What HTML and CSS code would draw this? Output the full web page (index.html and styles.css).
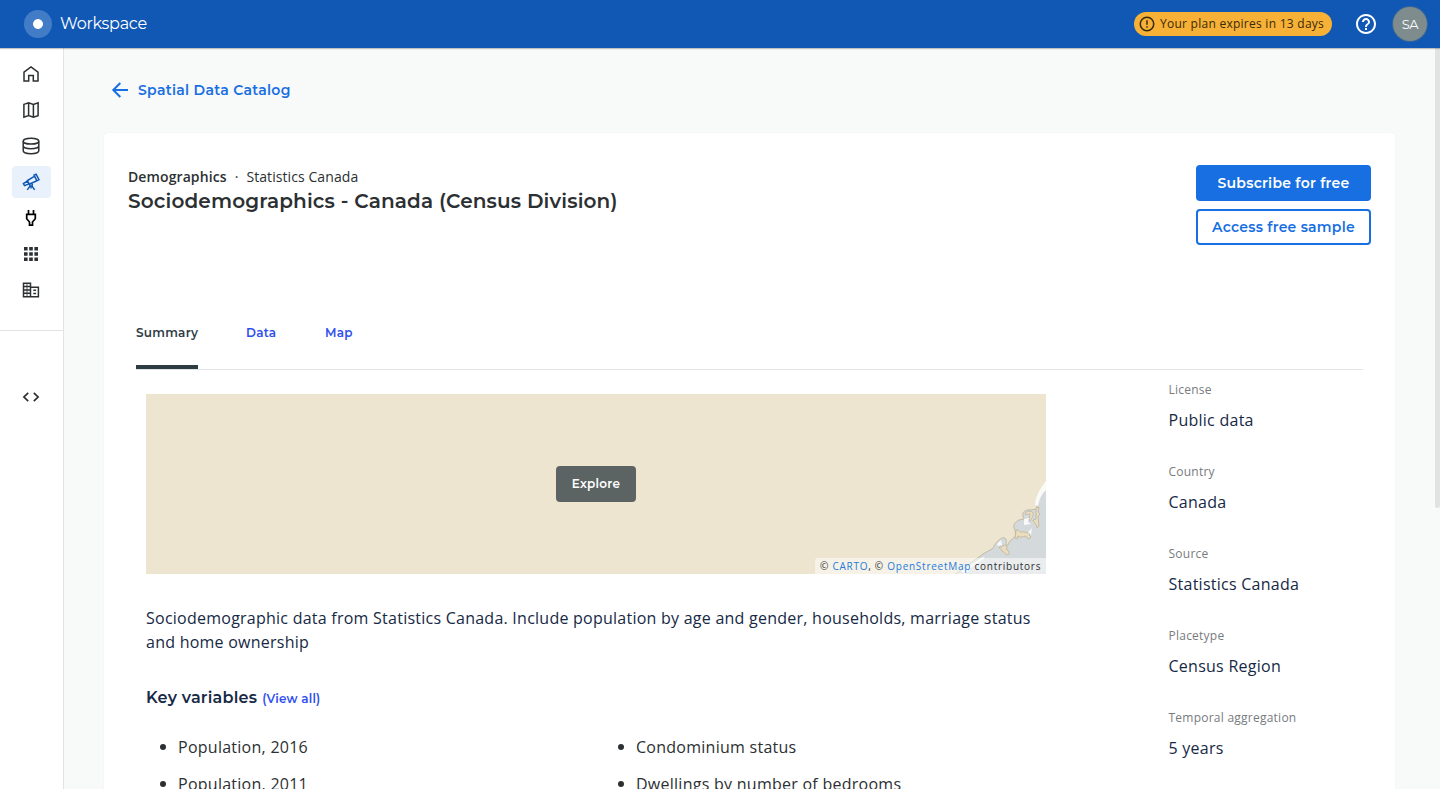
FILE: index.html
```html
<!DOCTYPE html>
<html lang="en">
<head>
<meta charset="utf-8">
<title>Workspace</title>
<link rel="stylesheet" href="styles.css">
</head>
<body>
<header class="topbar">
  <span class="logo"></span>
  <span class="brand">Workspace</span>
  <div class="plan">
    <svg width="18" height="18" viewBox="0 0 24 24" fill="#3a2a0c"><path d="M11 15h2v2h-2zM11 7h2v6h-2zM12 2a10 10 0 1 0 0 20 10 10 0 0 0 0-20zm0 18a8 8 0 1 1 0-16 8 8 0 0 1 0 16z"/></svg>
    <span>Your plan expires in 13 days</span>
  </div>
  <svg class="help" width="24" height="24" viewBox="0 0 24 24" fill="#fff"><path d="M11 18h2v-2h-2v2zm1-16C6.480 2 2 6.480 2 12s4.480 10 10 10 10-4.480 10-10S17.520 2 12 2zm0 18c-4.410 0-8-3.590-8-8s3.590-8 8-8 8 3.590 8 8-3.590 8-8 8zm0-14c-2.210 0-4 1.790-4 4h2c0-1.100.900-2 2-2s2 .900 2 2c0 2-3 1.750-3 5h2c0-2.250 3-2.500 3-5 0-2.210-1.790-4-4-4z"/></svg>
  <span class="avatar">SA</span>
</header>
<div class="body">
  <nav class="side">
    <a class="item"><svg width="18" height="18" viewBox="0 0 18 18" class="line"><path d="M2 7.100 9 2l7 5.100V16h-4.700v-5.500H6.700V16H2z"/></svg></a>
    <a class="item"><svg width="18" height="18" viewBox="0 0 18 18" class="line"><path d="M1.900 3.400 6.600 1.900l4.800 1.500 4.700-1.500v12.700l-4.700 1.500-4.800-1.500-4.700 1.500zM6.600 1.900v12.700M11.400 3.400v12.700"/></svg></a>
    <a class="item"><svg width="18" height="18" viewBox="0 0 18 18" class="line"><ellipse cx="9" cy="4.200" rx="7.800" ry="2.900"/><path d="M1.200 4.200v9.600c0 1.600 3.500 2.900 7.800 2.900s7.800-1.300 7.800-2.900V4.200M1.200 9c0 1.500 3.500 2.700 7.800 2.700s7.800-1.200 7.800-2.700"/></svg></a>
    <a class="item active"><svg width="18" height="18" viewBox="0 0 18 18" class="line"><path d="m12 2.200 2.100-1 2.900 5.500-2.100 1zM11.900 3.700 5.400 7.600l1.900 3.500 7.100-3.100M5.400 8.200 1.400 10.500l1.100 2.100 4.700-1.800"/><circle cx="9" cy="11.800" r="1.400"/><path d="m8.100 12.900-2.800 4M9.900 12.900l2.700 4M9 13.200v2.200"/></svg></a>
    <a class="item"><svg width="18" height="18" viewBox="0 0 18 18" class="line dark"><path d="M6.500 1v4M11.500 1v4M4.700 5.300h8.600v4.500L10.500 13v3.200h-3V13L4.700 9.800z"/></svg></a>
    <a class="item"><svg width="18" height="18" viewBox="0 0 18 18" fill="#2c3032"><path d="M2 2h3.600v3.600H2zM7.200 2h3.600v3.600H7.200zM12.400 2H16v3.600h-3.600zM2 7.200h3.600v3.600H2zM7.200 7.200h3.600v3.600H7.200zM12.400 7.200H16v3.600h-3.600zM2 12.400h3.600V16H2zM7.200 12.400h3.600V16H7.200zM12.400 12.400H16V16h-3.600z"/></svg></a>
    <a class="item"><svg width="18" height="18" viewBox="0 0 18 18" class="line"><path d="M1.500 2.200h7v13.500h-7zM8.500 6.200h7.900v9.500H8.500M1.500 5.500h7M1.500 9h7M1.500 12.300h7"/><path d="M5 2.200v13.500" stroke-width=".8"/><path d="M11.300 9.200h2.800M11.300 12.500h2.800"/></svg></a>
    <div class="rule"></div>
    <a class="item"><svg width="18" height="18" viewBox="0 0 18 18" class="line code"><path d="M6.200 4.800 1.900 9l4.300 4.200M11.800 4.800 16.100 9l-4.300 4.200"/></svg></a>
  </nav>
  <main class="main">
    <a class="back"><svg width="18" height="18" viewBox="0 0 18 18"><path d="M17 9H2.500M9.300 2 2.300 9l7 7" fill="none" stroke="#186fe2" stroke-width="2"/></svg><span class="backtext">Spatial Data Catalog</span></a>
    <section class="card">
      <div class="head">
        <div class="titles">
          <p class="crumb"><b>Demographics</b><i>·</i><span>Statistics Canada</span></p>
          <h1 class="title">Sociodemographics - Canada (Census Division)</h1>
        </div>
        <div class="actions">
          <a class="btn solid"><span>Subscribe for free</span></a>
          <a class="btn outline"><span>Access free sample</span></a>
        </div>
      </div>
      <div class="tabs"><a class="tab on">Summary</a><a class="tab data">Data</a><a class="tab mapt">Map</a></div>
      <div class="content">
        <div class="left">
          <div class="map">
            <svg class="coast" width="120" height="110" viewBox="0 0 120 110">
              <path d="M28 111 42 101l15-11 9-5c2-1 2-5 5-7 2-3 7-6 9-3 1 3-1 7 2 6 1-4 4-6 8-9l-1-6c-3-4 0-8 4-10l5-1c-3-5 0-10 6-9l7-1c-1-6 3-18 13-29v97z" fill="#d4d9dc" stroke="#c3bba6"/>
              <path d="M120 17c-6 7-11 17-11 24l3 1c2-9 4-12 8-16z" fill="#fafaf7"/>
              <g fill="#eadcbc" stroke="#bbb29d" stroke-width=".8">
                <path d="M73 83c3 1 5-3 7-2s0 3 1 5c2 0 3 4 1 5-3 0-3-3-6-4z"/>
                <path d="M99 50c0-3 7-4 8-1 1 2-1 5-3 8-2-1 0-5 0-7-2-1-3 2-5 0zM110 44l3-1-1 5 2 2-2 2 1 10-2 2c0-5-4-5-4-8l3-1z"/>
                <path d="M90 66c3-1 3 2 5 2s3-1 6 1l3-2-1 4 2 2-2 2-4-3c-2 1-5 2-7 0l-1 3-2-1z"/>
              </g>
              <path d="m98 55 5-1-1 4 3 2-7 1zM102 68l4-4-1 7zM71 80l4-4 1 5-4 1z" fill="#f8f9f8"/>
              <path d="m35 107 22-14 2 1-12 8-8 8z" fill="#fafaf7"/>
            </svg>
            <a class="explore"><span>Explore</span></a>
            <div class="attr">© <a>CARTO</a>, © <a>OpenStreetMap</a> contributors</div>
          </div>
          <p class="desc">Sociodemographic data from Statistics Canada. Include population by age and gender, households, marriage status and home ownership</p>
          <div class="keys"><h2 class="keytitle">Key variables</h2><a class="view">(View all)</a></div>
          <ul class="vars"><li>Population, 2016</li><li>Condominium status</li><li>Population, 2011</li><li>Dwellings by number of bedrooms</li></ul>
        </div>
        <dl class="facts">
          <dt>License</dt><dd>Public data</dd>
          <dt>Country</dt><dd>Canada</dd>
          <dt>Source</dt><dd>Statistics Canada</dd>
          <dt>Placetype</dt><dd>Census Region</dd>
          <dt>Temporal aggregation</dt><dd>5 years</dd>
        </dl>
      </div>
    </section>
  </main>
  <div class="scroll"></div>
</div>
</body>
</html>
```
FILE: styles.css
```css
* { box-sizing: border-box; }
html, body { height: 100%; }
body { margin: 0; overflow: hidden; background: #f8f9f9; color: #2c3032; font: 16px/24px "Open Sans", sans-serif; letter-spacing: .26px; }
h1, h2, p, dl, dd, ul { margin: 0; padding: 0; }
svg { display: block; flex: none; }
.topbar { position: relative; z-index: 2; display: flex; align-items: center; height: 48px; padding: 0 13px 0 24px; background: #1158b5; color: #fff; box-shadow: 0 1px 1px rgba(44,48,50,.28); }
.logo { width: 28px; height: 28px; border-radius: 50%; background: radial-gradient(circle, #fff 4.500px, #427cc6 5.300px); }
.brand { margin-left: 8px; font: 400 16px/24px Montserrat, Inter, sans-serif; letter-spacing: -.25px; }
.plan { display: flex; align-items: center; gap: 4px; width: 198px; height: 24px; margin-left: auto; padding-left: 4px; border-radius: 12px; background: #f6b136; color: #3a2a0c; font-size: 12px; letter-spacing: .26px; white-space: nowrap; }
.help { margin-left: 22px; }
.avatar { width: 34px; height: 34px; margin-left: 15px; border-radius: 50%; background: #7f8c8d; box-shadow: 0 0 0 1px #386597; text-align: center; font: 400 13px/34px Montserrat, Inter, sans-serif; letter-spacing: -.4px; }
.body { display: flex; height: 741px; }
.side { display: flex; flex: none; flex-direction: column; gap: 4px; width: 64px; padding-top: 10px; border-right: 1px solid #e1e3e4; background: #fff; }
.item { display: flex; align-items: center; width: 39px; height: 32px; margin-left: 12px; padding-left: 10px; border-radius: 4px; }
.active { background: #e8f1fc; }
.line { fill: none; stroke: #2c3032; stroke-width: 1.500; }
.active .line { stroke: #1158b5; }
.dark { stroke: #000; stroke-width: 1.700; }
.code { stroke-width: 1.700; }
.rule { height: 1px; margin: 20px 0 46px; background: #e1e3e4; }
.main { flex: 1; padding: 30px 45px 0 40px; overflow: hidden; }
.back { display: flex; align-items: center; gap: 9px; height: 24px; padding-left: 7px; color: #186fe2; }
.backtext { font: 600 14px/24px Montserrat, Inter, sans-serif; letter-spacing: .3px; }
.card { height: 900px; margin-top: 31px; padding: 32px 24px 0; border-radius: 4px; background: #fff; box-shadow: 0 0 1px rgba(44,48,50,.12); }
.head { display: flex; justify-content: space-between; height: 126px; }
.crumb { height: 24px; font-size: 14px; letter-spacing: .08px; }
.crumb b { font-weight: 600; letter-spacing: .1px; }
.crumb i { margin: 0 8px; font-style: normal; }
.title { font: 600 20px/24px Montserrat, Inter, sans-serif; letter-spacing: .15px; white-space: nowrap; }
.actions { display: flex; flex-direction: column; gap: 8px; width: 175px; }
.btn { display: flex; align-items: center; justify-content: center; height: 36px; border-radius: 4px; font: 600 14px/20px Montserrat, Inter, sans-serif; letter-spacing: .25px; white-space: nowrap; }
.solid { background: #186fe2; color: #fff; }
.outline { border: 2px solid #186fe2; color: #186fe2; }
.tabs { display: flex; gap: 48px; height: 79px; margin: 0 8px; border-bottom: 1px solid #e1e3e4; }
.tab { height: 78px; padding-top: 30px; color: #2f50ee; font: 600 12px/24px Montserrat, Inter, sans-serif; letter-spacing: .27px; white-space: nowrap; }
.data { width: 31px; }
.on { width: 62px; color: #2e3c43; border-bottom: 4px solid #2e3c43; }
.content { display: flex; padding: 0 18px; }
.left { width: 900px; padding-top: 24px; flex: none; }
.map { position: relative; display: flex; align-items: center; justify-content: center; height: 180px; overflow: hidden; background: #ede5d0; }
.coast { position: absolute; right: 0; bottom: 0; }
.explore { z-index: 1; width: 80px; height: 36px; border-radius: 4px; background: #5b6463; color: #fff; text-align: center; font: 600 12px/36px Montserrat, Inter, sans-serif; letter-spacing: .25px; }
.attr { position: absolute; right: 0; bottom: 0; width: 231px; height: 16px; padding-left: 5px; border-radius: 3px 0 0; background: rgba(255,255,255,.5); font-size: 10px; line-height: 17px; letter-spacing: .74px; white-space: nowrap; }
.attr a { color: #247bdd; }
.desc { margin-top: 32px; color: #162945; letter-spacing: .245px; }
.keys { display: flex; align-items: center; gap: 5px; margin-top: 31px; }
.keytitle { color: #162945; font: 600 16px/24px Montserrat, Inter, sans-serif; letter-spacing: .22px; white-space: nowrap; }
.view { padding-top: 2px; color: #2f50ee; font: 600 12px/24px Montserrat, Inter, sans-serif; letter-spacing: .2px; }
.vars { display: grid; grid-template-columns: 458px 1fr; row-gap: 13px; margin-top: 24px; list-style: none; }
.vars li { display: flex; align-items: center; }
.vars li::before { content: ""; width: 6px; height: 6px; margin: 0 12px 0 14px; border-radius: 50%; background: #2c3032; }
.facts { margin: 10px 0 0 122.500px; color: #162945; white-space: nowrap; }
.facts dt { height: 20px; color: #777b7e; font-size: 12px; line-height: 20px; letter-spacing: .24px; }
.facts dd { height: 24px; margin: 8px 0 30px; }
.scroll { position: absolute; top: 48px; right: 0; width: 5px; height: 460px; border-radius: 0 0 3px 3px; background: #e1e2e2; }
```
